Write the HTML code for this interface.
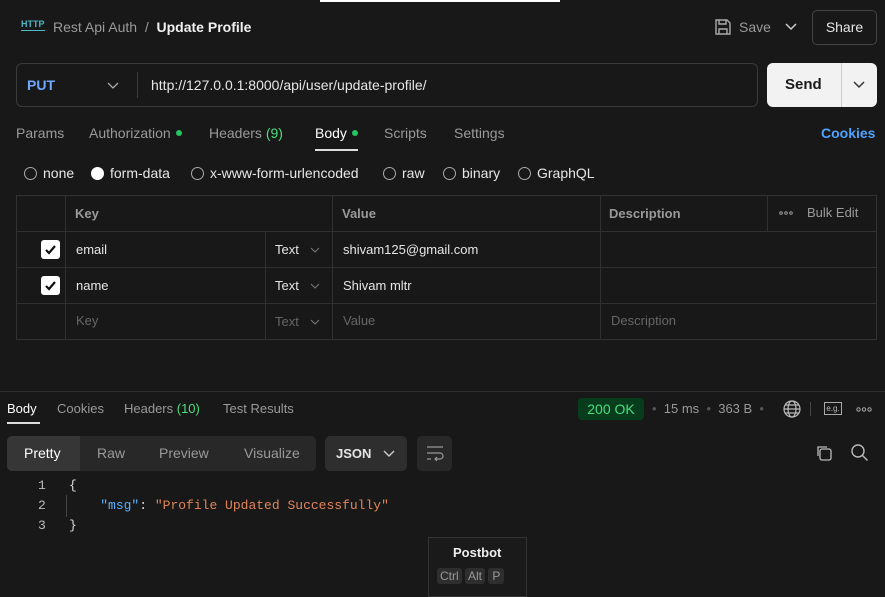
<!DOCTYPE html>
<html><head><style>
*{margin:0;padding:0;box-sizing:border-box}
body{width:885px;height:592px;background:#181818;font-family:"Liberation Sans",sans-serif;color:#e6e6e6;position:relative;overflow:hidden;font-size:14px}
.a{position:absolute;white-space:nowrap}
.g{color:#9a9a9a}
.ln{position:absolute;background:#303030}
.dot{display:inline-block;width:6px;height:6px;border-radius:50%;background:#22c55e;margin-left:5px;vertical-align:2px}
.rad{display:inline-block;width:13px;height:13px;border:1.5px solid #aaa;border-radius:50%;vertical-align:-2px;margin-right:6px}
.chk{position:absolute;left:41px;width:19px;height:19px;background:#fff;border-radius:3px}
.mono{font-family:"Liberation Mono",monospace}
.cv{position:absolute}
</style></head><body>
<div class="a" style="left:320px;top:0;width:240px;height:2px;background:#fff"></div>
<div class="a" style="left:21px;top:19px;color:#4bb8c4;font-size:9px;font-weight:bold;border-bottom:1.5px solid #4bb8c4;line-height:11px">HTTP</div>
<div class="a g" style="left:53px;top:19px;font-size:14px">Rest Api Auth&nbsp; /&nbsp; <b style="color:#f0f0f0">Update Profile</b></div>
<svg class="a" style="left:714px;top:18px" width="18" height="18" viewBox="0 0 18 18" fill="none" stroke="#aaa" stroke-width="1.4"><path d="M2 2h11l3 3v11H2z M5 2v4h7V2 M5 16v-5h8v5"/></svg>
<div class="a g" style="left:739px;top:19px;font-size:14px">Save</div>
<svg class="a" style="left:785px;top:23px" width="12" height="8"><path d="M1 1l5 5 5-5" stroke="#ccc" fill="none" stroke-width="1.5"/></svg>
<div class="a" style="left:812px;top:10px;width:65px;height:35px;border:1px solid #444;border-radius:5px;text-align:center;line-height:33px;font-size:14px">Share</div>

<div class="a" style="left:16px;top:63px;width:742px;height:44px;border:1px solid #3a3a3a;border-radius:6px"></div>
<div class="a" style="left:27px;top:77px;color:#6fa8ff;font-weight:bold;font-size:14px">PUT</div>
<svg class="a" style="left:107px;top:82px" width="12" height="8"><path d="M1 1l5 5 5-5" stroke="#aaa" fill="none" stroke-width="1.3"/></svg>
<div class="ln" style="left:137px;top:72px;width:1px;height:26px;background:#3a3a3a"></div>
<div class="a" style="left:151px;top:77px;font-size:14px">http://127.0.0.1:8000/api/user/update-profile/</div>
<div class="a" style="left:767px;top:63px;width:110px;height:44px;background:#f2f2f2;border-radius:6px"></div>
<div class="a" style="left:785px;top:76px;color:#1a1a1a;font-weight:bold;font-size:15px">Send</div>
<div class="ln" style="left:841px;top:63px;width:1px;height:44px;background:#ccc"></div>
<svg class="a" style="left:853px;top:81px" width="12" height="8"><path d="M1 1l5 5 5-5" stroke="#333" fill="none" stroke-width="1.5"/></svg>

<div class="a g" style="left:16px;top:125px">Params</div>
<div class="a g" style="left:89px;top:125px">Authorization<span class="dot"></span></div>
<div class="a g" style="left:209px;top:125px">Headers <span style="color:#4ade80">(9)</span></div>
<div class="a" style="left:315px;top:125px;color:#fff">Body<span class="dot"></span></div>
<div class="a" style="left:315px;top:149px;width:43px;height:2px;background:#ddd"></div>
<div class="a g" style="left:384px;top:125px">Scripts</div>
<div class="a g" style="left:454px;top:125px">Settings</div>
<div class="a" style="left:821px;top:125px;color:#4ea3ff;font-weight:bold">Cookies</div>

<div class="a" style="left:24px;top:165px"><span class="rad"></span>none</div>
<div class="a" style="left:91px;top:165px"><span class="rad" style="background:#fff;border-color:#fff"></span>form-data</div>
<div class="a" style="left:191px;top:165px"><span class="rad"></span>x-www-form-urlencoded</div>
<div class="a" style="left:383px;top:165px"><span class="rad"></span>raw</div>
<div class="a" style="left:443px;top:165px"><span class="rad"></span>binary</div>
<div class="a" style="left:518px;top:165px"><span class="rad"></span>GraphQL</div>

<div class="a" style="left:16px;top:195px;width:861px;height:145px;border:1px solid #333"></div>
<div class="ln" style="left:16px;top:231px;width:861px;height:1px"></div>
<div class="ln" style="left:16px;top:267px;width:861px;height:1px"></div>
<div class="ln" style="left:16px;top:303px;width:861px;height:1px"></div>
<div class="ln" style="left:65px;top:195px;width:1px;height:145px"></div>
<div class="ln" style="left:265px;top:231px;width:1px;height:109px"></div>
<div class="ln" style="left:332px;top:195px;width:1px;height:145px"></div>
<div class="ln" style="left:600px;top:195px;width:1px;height:145px"></div>
<div class="ln" style="left:767px;top:195px;width:1px;height:36px"></div>
<div class="a g" style="left:75px;top:206px;font-weight:bold;font-size:13px">Key</div>
<div class="a g" style="left:342px;top:206px;font-weight:bold;font-size:13px">Value</div>
<div class="a g" style="left:609px;top:206px;font-weight:bold;font-size:13px">Description</div>
<svg class="a" style="left:779px;top:211px" width="14" height="4"><circle cx="2" cy="2" r="1.3" fill="none" stroke="#999"/><circle cx="7" cy="2" r="1.3" fill="none" stroke="#999"/><circle cx="12" cy="2" r="1.3" fill="none" stroke="#999"/></svg>
<div class="a g" style="left:807px;top:205px;font-size:13px">Bulk Edit</div>
<div class="chk" style="top:240px"><svg width="19" height="19"><path d="M5 10l3 3 6-7" stroke="#111" stroke-width="2.2" fill="none"/></svg></div>
<div class="chk" style="top:276px"><svg width="19" height="19"><path d="M5 10l3 3 6-7" stroke="#111" stroke-width="2.2" fill="none"/></svg></div>
<div class="a" style="left:76px;top:242px;font-size:13px">email</div>
<div class="a" style="left:76px;top:278px;font-size:13px">name</div>
<div class="a" style="left:76px;top:313px;font-size:13px;color:#666">Key</div>
<div class="a" style="left:275px;top:242px;font-size:13px">Text</div>
<div class="a" style="left:275px;top:278px;font-size:13px">Text</div>
<div class="a" style="left:275px;top:314px;font-size:13px;color:#666">Text</div>
<svg class="cv" style="left:310px;top:247px" width="10" height="6"><path d="M1 1l4 4 4-4" stroke="#777" fill="none" stroke-width="1.1"/></svg>
<svg class="cv" style="left:310px;top:283px" width="10" height="6"><path d="M1 1l4 4 4-4" stroke="#777" fill="none" stroke-width="1.1"/></svg>
<svg class="cv" style="left:310px;top:319px" width="10" height="6"><path d="M1 1l4 4 4-4" stroke="#777" fill="none" stroke-width="1.1"/></svg>
<div class="a" style="left:343px;top:242px;font-size:13px">shivam125@gmail.com</div>
<div class="a" style="left:343px;top:278px;font-size:13px">Shivam mltr</div>
<div class="a" style="left:343px;top:313px;font-size:13px;color:#666">Value</div>
<div class="a" style="left:611px;top:313px;font-size:13px;color:#666">Description</div>

<div class="ln" style="left:0;top:391px;width:885px;height:1px;background:#2e2e2e"></div>
<div class="a" style="left:7px;top:401px;font-size:13px;color:#fff">Body</div>
<div class="a" style="left:7px;top:422px;width:33px;height:2px;background:#ddd"></div>
<div class="a g" style="left:57px;top:401px;font-size:13px">Cookies</div>
<div class="a g" style="left:124px;top:401px;font-size:13px">Headers <span style="color:#4ade80">(10)</span></div>
<div class="a g" style="left:223px;top:401px;font-size:13px">Test Results</div>
<div class="a" style="left:578px;top:398px;width:66px;height:22px;background:#073d1d;border-radius:4px;color:#4ade80;text-align:center;line-height:22px;font-size:14px">200 OK</div>
<div class="a g" style="left:652px;top:401px;font-size:13px"><span style="color:#555">•</span>&nbsp; 15 ms &nbsp;<span style="color:#555">•</span>&nbsp; 363 B &nbsp;<span style="color:#555">•</span></div>
<svg class="a" style="left:782px;top:399px" width="20" height="20" fill="none" stroke="#bbb" stroke-width="1.2"><circle cx="10" cy="10" r="8"/><ellipse cx="10" cy="10" rx="4" ry="8"/><path d="M2 10h16M3.5 6h13M3.5 14h13"/></svg>
<div class="ln" style="left:810px;top:402px;width:1px;height:14px;background:#444"></div>
<div class="a" style="left:824px;top:402px;width:18px;height:13px;border:1px solid #aaa;font-size:8px;color:#bbb;text-align:center;line-height:11px">e.g.</div>
<svg class="a" style="left:856px;top:407px" width="16" height="5"><circle cx="2.5" cy="2.5" r="1.7" fill="none" stroke="#aaa"/><circle cx="8" cy="2.5" r="1.7" fill="none" stroke="#aaa"/><circle cx="13.5" cy="2.5" r="1.7" fill="none" stroke="#aaa"/></svg>

<div class="a" style="left:7px;top:436px;width:309px;height:35px;background:#282828;border-radius:5px"></div>
<div class="a" style="left:7px;top:436px;width:73px;height:35px;background:#363636;border-radius:5px 0 0 5px"></div>
<div class="a" style="left:24px;top:445px;color:#fff">Pretty</div>
<div class="a g" style="left:97px;top:445px">Raw</div>
<div class="a g" style="left:159px;top:445px">Preview</div>
<div class="a g" style="left:244px;top:445px">Visualize</div>
<div class="a" style="left:325px;top:436px;width:82px;height:35px;background:#2e2e2e;border-radius:5px"></div>
<div class="a" style="left:336px;top:446px;font-size:13px;font-weight:bold">JSON</div>
<svg class="a" style="left:383px;top:450px" width="12" height="8"><path d="M1 1l5 5 5-5" stroke="#ccc" fill="none" stroke-width="1.4"/></svg>
<div class="a" style="left:417px;top:436px;width:35px;height:35px;background:#282828;border-radius:5px"></div>
<svg class="a" style="left:426px;top:445px" width="18" height="16" fill="none" stroke="#999" stroke-width="1.2"><path d="M1 2h16M1 8h13a3 3 0 010 6h-5M11 12l-2 2 2 2M1 14h4"/></svg>
<svg class="a" style="left:815px;top:444px" width="18" height="18" fill="none" stroke="#bbb" stroke-width="1.3"><rect x="5" y="5" width="11" height="11" rx="2"/><path d="M3 12V3h9"/></svg>
<svg class="a" style="left:850px;top:443px" width="19" height="19" fill="none" stroke="#bbb" stroke-width="1.4"><circle cx="8" cy="8" r="6"/><path d="M12.5 12.5l5 5"/></svg>

<div class="a mono" style="left:38px;top:476px;font-size:13px;color:#bbb;line-height:20px">1<br>2<br>3</div>
<div class="ln" style="left:66px;top:495px;width:1px;height:22px;background:#444"></div>
<div class="a mono" style="left:69px;top:476px;font-size:13px;line-height:20px;color:#ddd">{<br>&nbsp;&nbsp;&nbsp;&nbsp;<span style="color:#5ab0ff">"msg"</span>: <span style="color:#e0855a">"Profile Updated Successfully"</span><br>}</div>

<div class="a" style="left:428px;top:537px;width:99px;height:60px;border:1px solid #333;background:#1a1a1a"></div>
<div class="a" style="left:453px;top:545px;font-size:13px;font-weight:bold;color:#eee">Postbot</div>
<div class="a" style="left:437px;top:569px;font-size:12px;color:#999"><span style="background:#2e2e2e;padding:1px 3px;border-radius:3px">Ctrl</span> <span style="background:#2e2e2e;padding:1px 3px;border-radius:3px">Alt</span> <span style="background:#2e2e2e;padding:1px 4px;border-radius:3px">P</span></div>
</body></html>
